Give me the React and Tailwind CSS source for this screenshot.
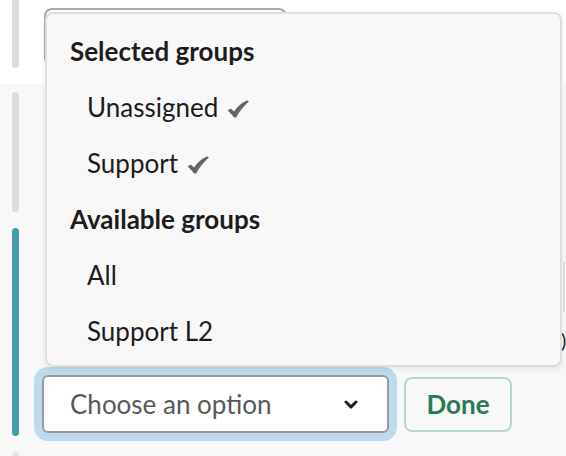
function Check() {
  return (
    <svg width="21" height="18" viewBox="0 -0.5 21 18" className="ml-[10px] mt-[4px]">
      <path d="M0 10.5 C0.5 9 2 8 3.5 8.5 L6 11 C9 6 14 2 19 0 C20 -0.2 21 0.5 20.5 1.5 C16 5.5 11 11 8.5 16.5 C8 17.3 6 17.3 5.5 16.5 C4 14 2 12 0 10.5 Z" fill="#666666" />
    </svg>
  );
}

export default function App() {
  const item = "h-[56px] flex items-center pl-[40px] text-[26px] text-[#1d1c1d]";
  const head = "h-[56px] flex items-center pl-[23px] text-[26px] font-bold text-[#1d1c1d]";
  return (
    <div
      className="relative w-[566px] h-[456px] overflow-hidden bg-[linear-gradient(#ffffff_0_84px,#f8f8f8_84px)] flex"
      style={{ fontFamily: "Lato, 'Noto Sans', sans-serif" }}
    >
      {/* left rail */}
      <div className="ml-[12px] w-[7px] flex flex-col shrink-0">
        <div className="shrink-0 h-[68px] w-full rounded-b-full bg-[#dddddd]" />
        <div className="shrink-0 mt-[24px] h-[120px] w-full rounded-full bg-[#dddddd]" />
        <div className="shrink-0 mt-[16px] h-[208px] w-full rounded-full bg-[#4a99ad]" />
        <div className="shrink-0 mt-[16px] h-[20px] w-full rounded-full bg-[#e4e4e4]" />
      </div>

      {/* content column */}
      <div className="ml-[15px] flex flex-col flex-1">
        <div className="mt-[8px] ml-[10px] w-[243px] h-[58px] rounded-[8px] border-2 border-[#aaaaaa] bg-white" />
        <div className="mt-[301px] flex items-start">
          <div className="rounded-[14px] bg-[#bddbeb] p-[8px]">
            <div className="w-[347px] h-[58px] rounded-[6px] border-2 border-[#9b9b9b] bg-white flex items-center pl-[26px] pr-[29px]">
              <span className="flex-1 text-[26px] text-[#595959]">Choose an option</span>
              <svg width="14" height="10" viewBox="0 0 14 10" className="mt-[2px]">
                <path d="M2 2 L7 7 L12 2" fill="none" stroke="#1d1c1d" strokeWidth="3" strokeLinecap="round" strokeLinejoin="round" />
              </svg>
            </div>
          </div>
          <div className="ml-[7px] mt-[10px] w-[108px] h-[55px] rounded-[8px] border-2 border-[#b5d8ca] flex items-center justify-center text-[26px] font-bold text-[#2b7a57]">
            Done
          </div>
        </div>
      </div>

      {/* things peeking behind the menu at right */}
      <div className="absolute left-[563px] top-[262px] w-[2px] h-[50px] bg-[#dddddd]" />
      <div className="absolute left-[561px] top-[330px] text-[20px] leading-none text-[#1d1c1d]">)</div>

      {/* dropdown menu */}
      <div className="absolute left-[45px] top-[12px] w-[517px] h-[355px] rounded-[8px] border-2 border-[#dedede] bg-[#f8f8f8] shadow-[0_2px_6px_rgba(0,0,0,0.08)] pt-[9px]">
        <div className={head}>Selected groups</div>
        <div className={item}>
          Unassigned <Check />
        </div>
        <div className={item}>
          Support <Check />
        </div>
        <div className={head}>Available groups</div>
        <div className={item}>All</div>
        <div className={item}>Support L2</div>
      </div>
    </div>
  );
}
